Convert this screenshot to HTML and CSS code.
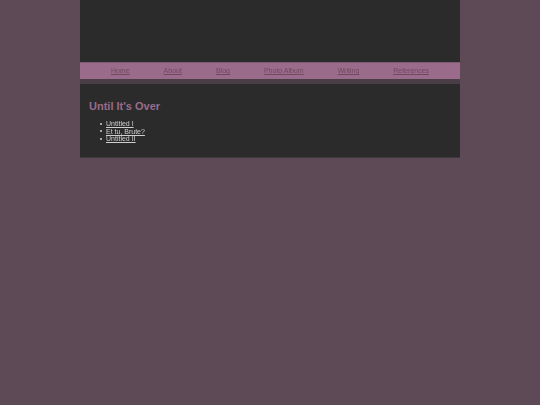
FILE: index.html
```
<!DOCTYPE html>
<html>
<head>
<meta charset="utf-8">
<link rel="stylesheet" href="styles.css">
</head>
<body>
<div class="wrap">
  <div class="header"></div>
  <div class="nav">
    <a href="#">Home</a><a href="#">About</a><a href="#">Blog</a><a href="#">Photo Album</a><a href="#">Writing</a><a href="#">References</a>
  </div>
  <div class="content">
    <h2 class="title">Until It's Over</h2>
    <ul class="list">
      <li><a href="#">Untitled I</a></li>
      <li><a href="#">Et tu, Brute?</a></li>
      <li><a href="#">Untitled II</a></li>
    </ul>
  </div>
</div>
</body>
</html>
```
FILE: styles.css
```
html, body {
  margin: 0;
  padding: 0;
  background: #5e4a56;
  font-family: "Liberation Sans", Arial, sans-serif;
}
.wrap {
  width: 380px;
  margin: 0 auto;
}
.header {
  height: 62px;
  background: #2b2b2b;
}
.nav {
  border-top: 1px solid #7d5a72;
  background: #9a6b8b;
  height: 16px;
  line-height: 16px;
  font-size: 7px;
  text-align: center;
  border-bottom: 5px solid #4a3e46;
  will-change: transform;
}
.nav a {
  color: #70495f;
  text-decoration: underline;
  padding: 0 17px;
}
.content {
  background: #2b2b2b;
  padding: 15px 9px 14px;
  border-bottom: 1px solid #3a3a3a;
}
.title {
  margin: 0 0 7px;
  font-size: 11px;
  font-weight: bold;
  color: #9a6b8b;
  line-height: 14px;
}
.list {
  margin: 0;
  padding-left: 11px;
  list-style: none;
  font-size: 7px;
  line-height: 7.5px;
  color: #d8d8d8;
  will-change: transform;
}
.list li {
  display: flex;
  align-items: center;
  gap: 4px;
}
.list li::before {
  content: "";
  width: 2px;
  height: 2px;
  border-radius: 1px;
  background: #d0d0d0;
}
.list a {
  color: #cfcfcf;
}
```
